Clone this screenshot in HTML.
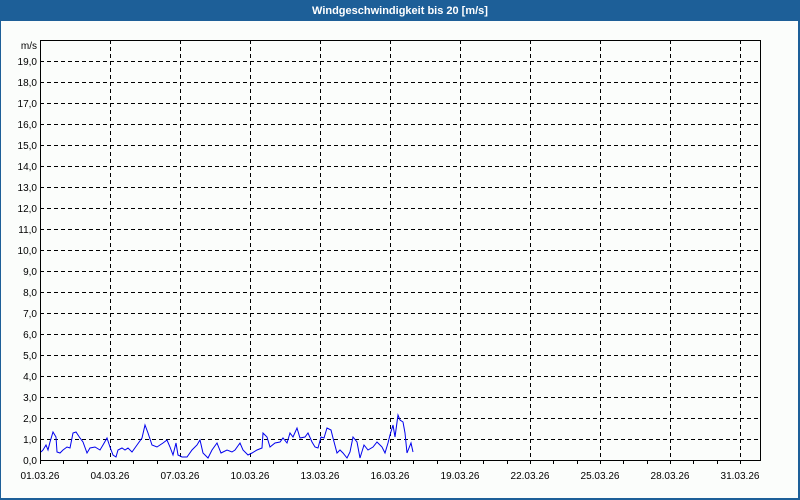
<!DOCTYPE html>
<html><head><meta charset="utf-8"><style>
html,body{margin:0;padding:0;background:#fbfdfb}
svg{display:block;font-family:"Liberation Sans","DejaVu Sans",sans-serif}
</style></head><body>
<svg width="800" height="500" viewBox="0 0 800 500" xmlns="http://www.w3.org/2000/svg">
<rect x="0" y="0" width="800" height="500" fill="#1d5f98"/>
<rect x="1" y="21" width="797" height="477" fill="#fbfdfb"/>
<text x="400" y="14" fill="#fff" font-size="11" font-weight="bold" text-anchor="middle">Windgeschwindigkeit bis 20 [m/s]</text>
<g stroke="#000" stroke-width="1" stroke-dasharray="4,3" shape-rendering="crispEdges">
<path d="M40 61.5H760M40 82.5H760M40 103.5H760M40 124.5H760M40 145.5H760M40 166.5H760M40 187.5H760M40 208.5H760M40 229.5H760M40 250.5H760M40 271.5H760M40 292.5H760M40 313.5H760M40 334.5H760M40 355.5H760M40 376.5H760M40 397.5H760M40 418.5H760M40 439.5H760"/>
<path d="M110.5 40V460M180.5 40V460M250.5 40V460M320.5 40V460M390.5 40V460M460.5 40V460M530.5 40V460M600.5 40V460M670.5 40V460M740.5 40V460"/>
</g>
<g stroke="#000" stroke-width="1" shape-rendering="crispEdges" fill="none">
<rect x="40.5" y="40.5" width="720" height="420"/>
<path d="M40.5 460V464M63.5 460V464M87.5 460V464M110.5 460V464M133.5 460V464M157.5 460V464M180.5 460V464M203.5 460V464M227.5 460V464M250.5 460V464M273.5 460V464M297.5 460V464M320.5 460V464M343.5 460V464M367.5 460V464M390.5 460V464M413.5 460V464M437.5 460V464M460.5 460V464M483.5 460V464M507.5 460V464M530.5 460V464M553.5 460V464M577.5 460V464M600.5 460V464M623.5 460V464M647.5 460V464M670.5 460V464M693.5 460V464M717.5 460V464M740.5 460V464"/>
</g>
<polyline fill="none" stroke="#0000ee" stroke-width="1" points="41,452 43,450 46,445 48,450 50,442 53,432 56,437 57,452 60,453 63,450 67,447 70,448 73,433 76,432 80,438 83,442 87,453 90,448 95,447 100,450 103,445 107,438 110,447 113,455 116,457 118,450 122,448 125,450 128,448 132,452 137,445 142,438 145,425 148,433 152,445 157,447 160,445 163,443 167,440 170,447 173,455 176,443 178,455 182,457 187,457 192,450 197,445 200,440 203,453 208,458 212,450 217,443 221,453 227,450 232,452 235,450 240,443 243,450 248,455 252,453 257,450 262,448 263,433 267,437 270,447 275,443 280,442 283,438 287,443 290,433 293,437 297,428 300,438 305,437 308,433 312,442 315,447 318,448 321,437 324,438 327,428 331,430 333,438 337,453 340,450 343,453 347,458 350,452 353,437 357,442 360,458 364,445 368,450 373,447 377,442 382,447 385,453 388,443 390,435 393,425 395,437 398,415 400,420 403,422 405,433 407,453 411,443 413,452"/>
<g font-size="10" fill="#000" text-anchor="end">
<text x="37" y="49">m/s</text>
<text x="37" y="65">19,0</text><text x="37" y="86">18,0</text><text x="37" y="107">17,0</text><text x="37" y="128">16,0</text><text x="37" y="149">15,0</text><text x="37" y="170">14,0</text><text x="37" y="191">13,0</text><text x="37" y="212">12,0</text><text x="37" y="233">11,0</text><text x="37" y="254">10,0</text><text x="37" y="275">9,0</text><text x="37" y="296">8,0</text><text x="37" y="317">7,0</text><text x="37" y="338">6,0</text><text x="37" y="359">5,0</text><text x="37" y="380">4,0</text><text x="37" y="401">3,0</text><text x="37" y="422">2,0</text><text x="37" y="443">1,0</text><text x="37" y="464">0,0</text>
</g>
<g font-size="10" fill="#000" text-anchor="middle">
<text x="40" y="479">01.03.26</text><text x="110" y="479">04.03.26</text><text x="180" y="479">07.03.26</text><text x="250" y="479">10.03.26</text><text x="320" y="479">13.03.26</text><text x="390" y="479">16.03.26</text><text x="460" y="479">19.03.26</text><text x="530" y="479">22.03.26</text><text x="600" y="479">25.03.26</text><text x="670" y="479">28.03.26</text><text x="740" y="479">31.03.26</text>
</g>
</svg>
</body></html>
